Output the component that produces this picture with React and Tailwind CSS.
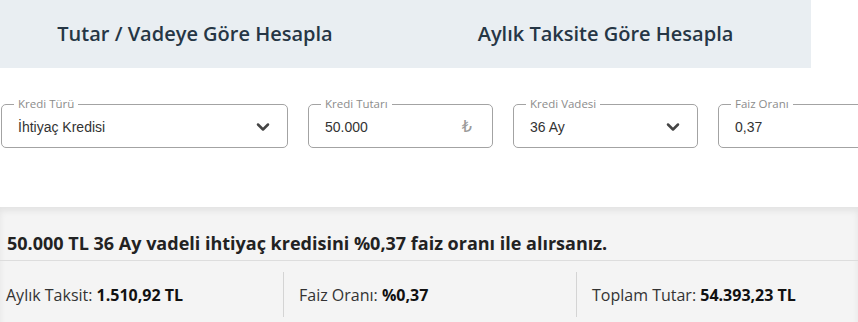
import { ChevronDown } from "lucide-react";

const fields = [
  { label: "Kredi Türü", value: "İhtiyaç Kredisi", w: "w-[287px]", kind: "select" },
  { label: "Kredi Tutarı", value: "50.000", w: "w-[185px]", kind: "money" },
  { label: "Kredi Vadesi", value: "36 Ay", w: "w-[185px]", kind: "select" },
  { label: "Faiz Oranı", value: "0,37", w: "w-[287px]", kind: "text" },
];

function Field({ label, value, w, kind }) {
  return (
    <div className={`relative ${w} h-[44px] shrink-0 rounded-[5px] border border-[#a3a3a3] flex items-center pl-[16px] pr-[14px]`}>
      <span className="absolute -top-[8px] left-[12px] bg-white px-[4px] text-[11.5px] leading-[14px] text-[#8c8c8c] font-['Open_Sans']">
        {label}
      </span>
      <span className="flex-1 pt-[3px] text-[14px] text-[#333] font-['Liberation_Sans',Arial,sans-serif]">{value}</span>
      {kind === "select" && <ChevronDown size={20} strokeWidth={3} className="text-[#444] mt-[1px]" />}
      {kind === "money" && <span className="text-[16px] text-[#9a9a9a] pr-[6px] pt-[2px] font-['DejaVu_Sans',sans-serif]">₺</span>}
    </div>
  );
}

export default function App() {
  return (
    <div className="w-[858px] h-[322px] overflow-hidden bg-white font-['Open_Sans',sans-serif]">
      <div className="flex w-[811px] h-[68px] bg-[#e9eef2] text-[20px] font-semibold text-[#263645]">
        <div className="w-[390px] flex items-center justify-center pb-[1px]">Tutar / Vadeye Göre Hesapla</div>
        <div className="w-[421px] flex items-center justify-center pl-[10px] pb-[1px]">Aylık Taksite Göre Hesapla</div>
      </div>

      <div className="flex gap-[20px] pl-[1px] pt-[36px]">
        {fields.map(f => <Field key={f.label} {...f} />)}
      </div>

      <div className="mt-[59px] bg-[#f4f4f4] shadow-[inset_0_4px_6px_rgba(0,0,0,0.07)]">
        <div className="h-[54px] pt-[24px] pl-[7px] leading-[24px] text-[18px] font-bold text-[#222] border-b border-[#dddddd] whitespace-nowrap">
          50.000 TL 36 Ay vadeli ihtiyaç kredisini %0,37 faiz oranı ile alırsanız.
        </div>
        <div className="flex py-[11px] text-[16px] text-[#333] whitespace-nowrap">
          <div className="w-[283px] h-[45px] shrink-0 flex items-center pl-[6px]">
            Aylık Taksit:&nbsp;<b className="text-[#111]">1.510,92 TL</b>
          </div>
          <div className="w-[293px] h-[45px] shrink-0 flex items-center pl-[15px] border-l border-[#d4d4d4]">
            Faiz Oranı:&nbsp;<b className="text-[#111]">%0,37</b>
          </div>
          <div className="w-[293px] h-[45px] shrink-0 flex items-center pl-[15px] border-l border-[#d4d4d4]">
            Toplam Tutar:&nbsp;<b className="text-[#111]">54.393,23 TL</b>
          </div>
        </div>
      </div>
    </div>
  );
}
